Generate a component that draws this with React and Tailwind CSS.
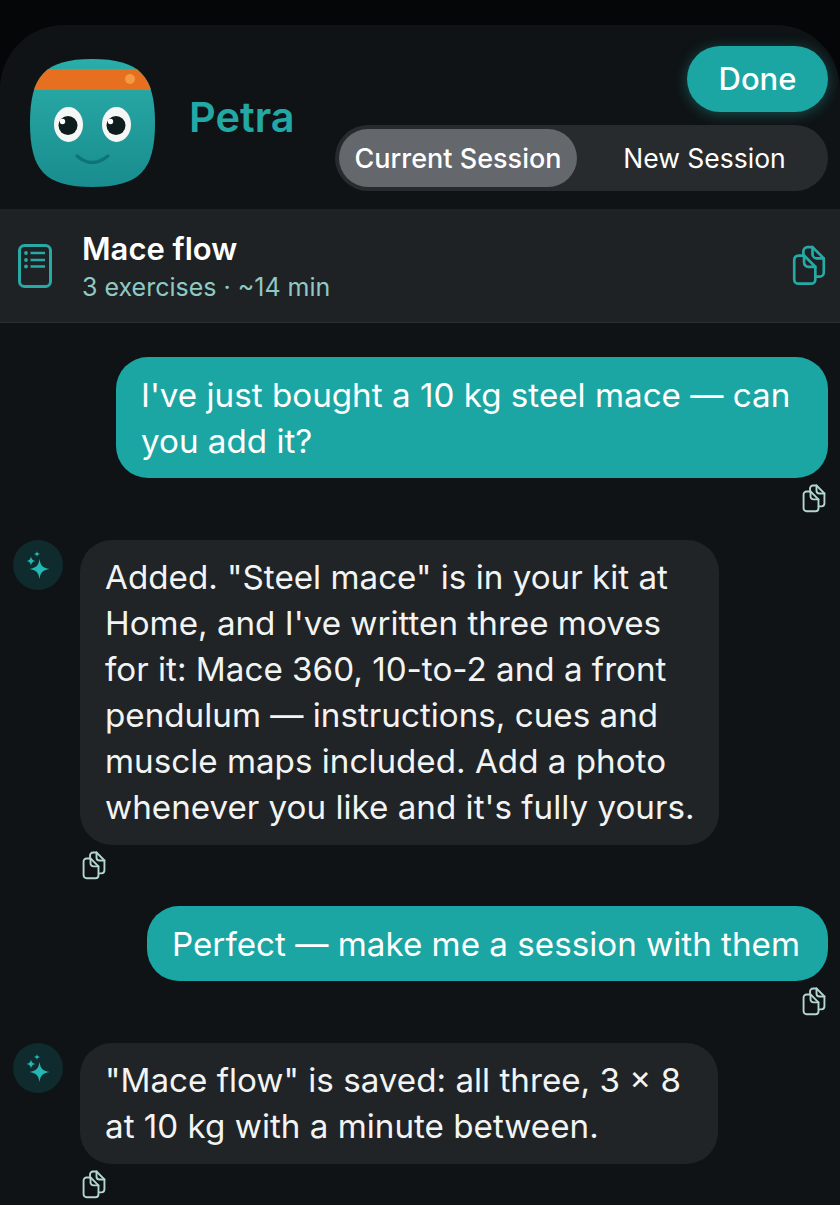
import React from 'react';

const facePath = 'M92 59C140 59 155 76 155 123C155 170 140 187 92 187C45 187 30 170 30 123C30 76 45 59 92 59Z';

const Avatar = () => (
  <svg width="128" height="132" viewBox="29 57 128 132" className="shrink-0">
    <defs>
      <linearGradient id="face" x1="0" y1="0" x2="0" y2="1">
        <stop offset="0" stopColor="#2aaeaa" />
        <stop offset="1" stopColor="#198c8e" />
      </linearGradient>
      <clipPath id="squircle">
        <path d={facePath} />
      </clipPath>
    </defs>
    <path d={facePath} fill="url(#face)" />
    <rect x="29" y="69" width="128" height="21" fill="#e6701f" clipPath="url(#squircle)" />
    <circle cx="130" cy="79" r="5" fill="#f49a45" />
    <ellipse cx="68.5" cy="124.5" rx="14.5" ry="17.5" fill="#f4f7f6" />
    <ellipse cx="116.5" cy="124.5" rx="14.5" ry="17.5" fill="#f4f7f6" />
    <circle cx="68" cy="125.5" r="9.5" fill="#0f1c1e" />
    <circle cx="116" cy="125.5" r="9.5" fill="#0f1c1e" />
    <circle cx="62.5" cy="121.5" r="2.7" fill="#fff" />
    <circle cx="110.5" cy="121.5" r="2.7" fill="#fff" />
    <path d="M77 156Q92 169 108 156" fill="none" stroke="#0e7477" strokeWidth="3.2" strokeLinecap="round" />
  </svg>
);

const ListIcon = () => (
  <svg width="36" height="46" viewBox="0 0 36 46" fill="none" stroke="#27aaa6" strokeWidth="3">
    <rect x="2.5" y="2.5" width="31" height="41" rx="5" />
    <path d="M13.5 10H28M13.5 17H28M13.5 23.5H28" strokeWidth="2.6" />
    <circle cx="9" cy="10" r="1.9" fill="#27aaa6" stroke="none" />
    <circle cx="9" cy="17" r="1.9" fill="#27aaa6" stroke="none" />
    <circle cx="9" cy="23.5" r="1.9" fill="#27aaa6" stroke="none" />
  </svg>
);

const CopyIcon = ({ size = 24, color = '#b4d6d3' }) => (
  <svg width={size} height={size * 1.2} viewBox="0 0 24 29" fill="none" stroke={color} strokeWidth="1.9" strokeLinejoin="round" strokeLinecap="round">
    <path d="M8 7.5V4.5A3 3 0 0 1 11 1.5H14.5L22.5 9.5V19.5A3 3 0 0 1 19.5 22.5H17" />
    <path d="M14.5 1.5V6.5A3 3 0 0 0 17.5 9.5H22.5" />
    <path d="M1.5 10.5A3 3 0 0 1 4.5 7.5H8.5L16.5 15.5V24.5A3 3 0 0 1 13.5 27.5H4.5A3 3 0 0 1 1.5 24.5Z" />
    <path d="M8.5 7.5V12.5A3 3 0 0 0 11.5 15.5H16.5" />
  </svg>
);

const Sparkle = () => (
  <div className="w-[50px] h-[50px] rounded-full bg-[#0f2b2e] flex items-center justify-center shrink-0">
    <svg width="30" height="30" viewBox="0 0 30 30" fill="#24b8b4">
      <path d="M16.5 9C17.6 15.6 19.4 17.6 26.5 19C19.4 20.4 17.6 22.4 16.5 29C15.4 22.4 13.6 20.4 6.5 19C13.6 17.6 15.4 15.6 16.5 9Z" />
      <path d="M8 6.5C8.5 9.2 9.5 10.4 12.5 11C9.5 11.6 8.5 12.8 8 15.5C7.5 12.8 6.5 11.6 3.5 11C6.5 10.4 7.5 9.2 8 6.5Z" />
      <path d="M14 1C14.3 2.8 14.9 3.6 17 4C14.9 4.4 14.3 5.2 14 7C13.7 5.2 13.1 4.4 11 4C13.1 3.6 13.7 2.8 14 1Z" />
    </svg>
  </div>
);

const UserMessage = ({ width, children }) => (
  <div className="flex flex-col items-end pr-3">
    <div className={`${width} rounded-[32px] bg-[#1ba6a3] text-white pl-[25px] pt-[15px] pb-[14px] text-[33.2px] leading-[46px] whitespace-nowrap`}>
      {children}
    </div>
    <div className="mt-[6px] mr-[2px] h-[29px]">
      <CopyIcon />
    </div>
  </div>
);

const BotMessage = ({ width, children }) => (
  <div className="flex gap-[17px] pl-[13px]">
    <Sparkle />
    <div className="flex flex-col items-start">
      <div className={`${width} rounded-[32px] bg-[#212426] text-[#f2f4f4] pl-[25px] pt-[14px] pb-[15px] text-[33.2px] leading-[46px] whitespace-nowrap`}>
        {children}
      </div>
      <div className="mt-[6px] ml-[2px] h-[29px]">
        <CopyIcon />
      </div>
    </div>
  </div>
);

export default function App() {
  return (
    <div className="w-[840px] h-[1205px] overflow-hidden bg-[#050607] pt-[25px] font-['Inter',sans-serif]">
      <div className="h-full rounded-t-[64px] bg-[#0f1315] flex flex-col">
        <div className="h-[184px] flex pl-[29px] pr-3 shrink-0">
          <div className="pt-[32px]">
            <Avatar />
          </div>
          <div className="ml-[32px] pt-[67px] text-[41.5px] leading-[50px] font-semibold text-[#22a9a5]">Petra</div>
          <div className="flex-1 flex flex-col items-end pt-[21px]">
            <button className="w-[141px] h-[66px] rounded-full bg-[#1ba6a3] text-white text-[31px] font-medium shadow-[0_2px_14px_rgba(34,170,165,0.4)]">
              Done
            </button>
            <div className="mt-[13px] w-[493px] h-[66px] rounded-full bg-[#282b2e] p-1 flex items-center text-white">
              <div className="w-[238px] h-[58px] rounded-full bg-[#64676b] text-[27px] font-medium flex items-center justify-center pt-[2px]">
                Current Session
              </div>
              <div className="flex-1 flex items-center justify-center pl-[8px] pt-[2px] text-[26.5px]">New Session</div>
            </div>
          </div>
        </div>

        <div className="h-[114px] bg-[#1f2224] border-b border-[#2a2d2f] flex items-center pl-[17px] pr-[14px] shrink-0">
          <ListIcon />
          <div className="ml-[29px] flex-1 pt-[4px]">
            <div className="text-[31px] leading-[38px] font-semibold text-white">Mace flow</div>
            <div className="text-[25px] leading-[38px] text-[#8fc9c4]">3 exercises · ~14 min</div>
          </div>
          <CopyIcon size={34} color="#27aaa6" />
        </div>

        <div className="flex flex-col pt-[34px]">
          <UserMessage width="w-[712px]">
            I've just bought a 10 kg steel mace — can
            <br />
            you add it?
          </UserMessage>
          <div className="h-[27px]" />
          <BotMessage width="w-[639px]">
            Added. "Steel mace" is in your kit at
            <br />
            Home, and I've written three moves
            <br />
            for it: Mace 360, 10-to-2 and a front
            <br />
            pendulum — instructions, cues and
            <br />
            muscle maps included. Add a photo
            <br />
            whenever you like and it's fully yours.
          </BotMessage>
          <div className="h-[26px]" />
          <UserMessage width="w-[681px]">Perfect — make me a session with them</UserMessage>
          <div className="h-[27px]" />
          <BotMessage width="w-[638px]">
            "Mace flow" is saved: all three, 3 × 8
            <br />
            at 10 kg with a minute between.
          </BotMessage>
        </div>
      </div>
    </div>
  );
}
